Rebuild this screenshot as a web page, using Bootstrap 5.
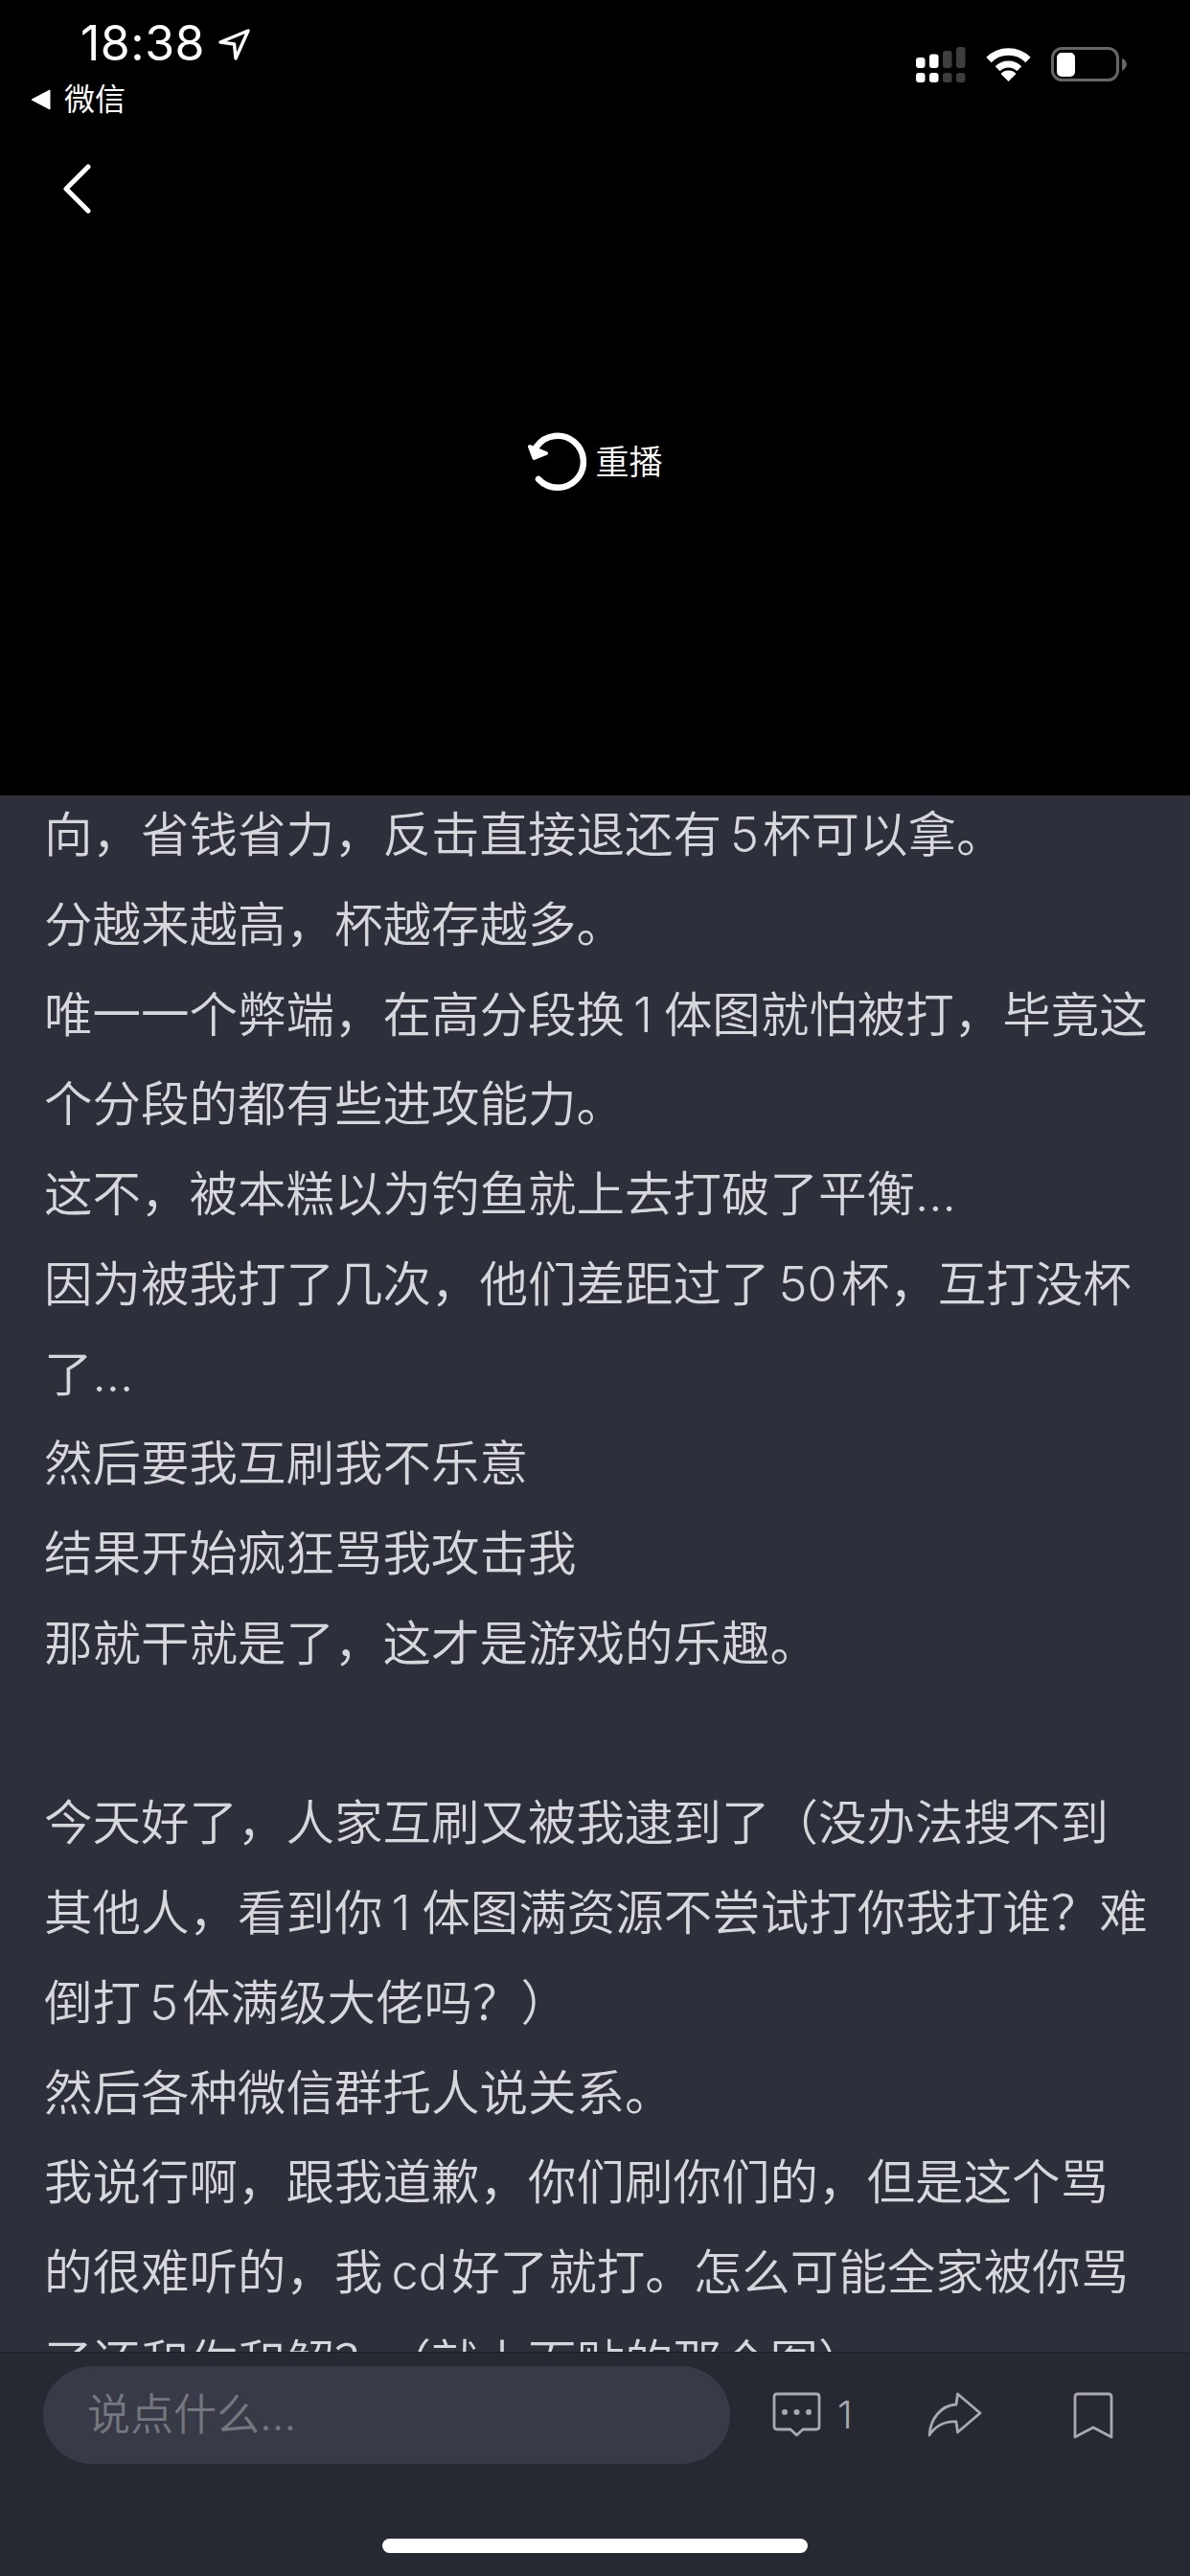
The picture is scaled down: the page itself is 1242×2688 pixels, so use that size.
<!DOCTYPE html>
<html lang="zh-CN">
<head>
<meta charset="utf-8">
<title>文章</title>
<link rel="stylesheet" href="https://cdn.jsdelivr.net/npm/bootstrap@5.3.0/dist/css/bootstrap.min.css">
<style>
html,body{margin:0;background:#000;}
.screen{width:1242px;height:2688px;font-family:Inter,"Noto Sans CJK SC",sans-serif;}
.topzone{height:830px;background:#000;color:#fff;flex:none;}
.statusrow{height:162px;padding:0 65px 0 32px;}
.timeline{padding-left:52px;height:80px;font-family:Inter,sans-serif;font-size:50px;line-height:90px;gap:14px;font-weight:400;letter-spacing:.5px;}
.locarrow{margin-top:30px;}
.backapp{height:40px;font-size:32px;line-height:40px;gap:14px;margin-top:4px;}
.sysicons{margin-top:49px;gap:21px;}
.navrow{height:70px;padding-left:64px;}
.replayrow{padding-bottom:98px;gap:9px;font-size:35px;font-weight:350;}
.articlezone{background:#2d2f3b;color:#d6d7db;font-size:50.5px;line-height:93.75px;padding:0 40px 0 46px;overflow:hidden;min-height:0;font-weight:350;}
.articletext{margin-top:-6px;}
.gapped{margin:0 4px 0 9px;font-weight:300;}
.gappedone{margin:0 12px 0 9px;font-weight:300;}
.footzone{height:234px;flex:none;background:#262832;border-top:1px solid #1f2029;padding:14px 0 0 45px;}
.saybox{width:717px;height:102px;background:#383b47;border-radius:51px;padding-left:46px;color:#75777f;font-size:45px;font-weight:350;}
.commenticon{margin-left:44px;}
.countnum{margin-left:17px;width:20px;color:#a9aab0;font-family:Inter,sans-serif;font-size:40px;font-weight:300;line-height:1;}
.shareicon{margin-left:74px;}
.markicon{margin-left:95px;}
.homebar{width:444px;height:15px;border-radius:8px;background:#fff;margin:78px 0 0 354px;}
svg{display:block;flex:none;}
</style>
</head>
<body>
<div class="screen d-flex flex-column overflow-hidden">
  <div class="topzone d-flex flex-column">
    <div class="statusrow d-flex justify-content-between align-items-start">
      <div>
        <div class="timeline d-flex align-items-start">
          <span>18:38</span>
          <svg class="locarrow" width="33" height="33" viewBox="0 0 33 33"><path d="M2 14 31 2 18 31 16.5 16Z" fill="none" stroke="#fff" stroke-width="3.4" stroke-linejoin="round"/></svg>
        </div>
        <div class="backapp d-flex align-items-center">
          <svg width="21" height="22" viewBox="0 0 21 22"><path d="M1 11 20 1V21Z" fill="#fff" stroke="#fff" stroke-width="1" stroke-linejoin="round"/></svg>
          <span>微信</span>
        </div>
      </div>
      <div class="sysicons d-flex align-items-start">
        <svg width="52" height="37" viewBox="0 0 52 37">
          <g fill="#fff"><rect x="0" y="11" width="9.5" height="11" rx="3"/><rect x="14" y="7.5" width="9.5" height="14.5" rx="3"/><rect x="0" y="27" width="9.5" height="10" rx="3"/><rect x="14" y="27" width="9.5" height="10" rx="3"/></g>
          <g fill="#3e3e3e"><rect x="28" y="4" width="9.5" height="18" rx="3"/><rect x="42" y="0" width="9.5" height="22" rx="3"/><rect x="28" y="27" width="9.5" height="10" rx="3"/><rect x="42" y="27" width="9.5" height="10" rx="3"/></g>
        </svg>
        <svg width="47" height="37" viewBox="0 0 47 37" fill="none" stroke="#fff">
          <path d="M3 13.5A29 29 0 0 1 44 13.5" stroke-width="7.5"/>
          <path d="M12.2 22.7A16 16 0 0 1 34.8 22.7" stroke-width="7"/>
          <path d="M23.5 36 15.5 28A11 11 0 0 1 31.5 28Z" fill="#fff" stroke="none"/>
        </svg>
        <svg width="80" height="37" viewBox="0 0 80 37">
          <rect x="1.5" y="1.5" width="68" height="33" rx="10" fill="none" stroke="#666" stroke-width="3"/>
          <rect x="6" y="6" width="19" height="25" rx="5" fill="#fff"/>
          <path d="M74 12C77 13 79 15.500 79 18S77 23 74 25Z" fill="#666"/>
        </svg>
      </div>
    </div>
    <div class="navrow d-flex align-items-center">
      <svg width="32" height="52" viewBox="0 0 32 52"><path d="M28 3 5 26 28 49" fill="none" stroke="#fff" stroke-width="5" stroke-linecap="round" stroke-linejoin="round"/></svg>
    </div>
    <div class="replayrow flex-grow-1 d-flex justify-content-center align-items-center">
      <svg width="62" height="62" viewBox="0 0 62 62">
        <path d="M10 15A27 27 0 1 1 12 49" fill="none" stroke="#fff" stroke-width="6.5" stroke-linecap="round"/>
        <path d="M3 15 7.500 27 20 22Z" fill="#fff" stroke="#fff" stroke-width="4" stroke-linejoin="round"/>
      </svg>
      <span>重播</span>
    </div>
  </div>
  <div class="articlezone flex-grow-1">
    <div class="articletext">
      <div>向，省钱省力，反击直接退还有<span class="gapped">5</span>杯可以拿。</div>
      <div>分越来越高，杯越存越多。</div>
      <div>唯一一个弊端，在高分段换<span class="gappedone">1</span>体图就怕被打，毕竟这个分段的都有些进攻能力。</div>
      <div>这不，被本糕以为钓鱼就上去打破了平衡...</div>
      <div>因为被我打了几次，他们差距过了<span class="gapped">50</span>杯，互打没杯了...</div>
      <div>然后要我互刷我不乐意</div>
      <div>结果开始疯狂骂我攻击我</div>
      <div>那就干就是了，这才是游戏的乐趣。</div>
      <div>&nbsp;</div>
      <div>今天好了，人家互刷又被我逮到了（没办法搜不到其他人，看到你<span class="gappedone">1</span>体图满资源不尝试打你我打谁？难倒打<span class="gapped">5</span>体满级大佬吗？）</div>
      <div>然后各种微信群托人说关系。</div>
      <div>我说行啊，跟我道歉，你们刷你们的，但是这个骂的很难听的，我<span class="gapped">cd</span>好了就打。怎么可能全家被你骂了还和你和解？（就上面贴的那个图）</div>
    </div>
  </div>
  <div class="footzone">
    <div class="d-flex align-items-center">
      <div class="saybox d-flex align-items-center">说点什么...</div>
      <svg class="commenticon" width="51" height="48" viewBox="0 0 51 48" fill="none" stroke="#a9aab0" stroke-width="2.800" stroke-linejoin="round">
        <path d="M5 2H46Q49 2 49 5V36Q49 39 46 39H32L25.500 45 19 39H5Q2 39 2 36V5Q2 2 5 2Z"/>
        <g fill="#a9aab0" stroke="none"><circle cx="13" cy="21" r="3"/><circle cx="25.500" cy="21" r="3"/><circle cx="38" cy="21" r="3"/></g>
      </svg>
      <span class="countnum">1</span>
      <svg class="shareicon" width="57" height="48" viewBox="0 0 57 48" fill="none" stroke="#a9aab0" stroke-width="2.800" stroke-linejoin="round"><path d="M31.500 2 55 22 31.500 42 30 31C18 30 8 36 2 45 3 28 14 14 30 13Z"/></svg>
      <svg class="markicon" width="42" height="49" viewBox="0 0 42 49" fill="none" stroke="#a9aab0" stroke-width="2.800" stroke-linejoin="round"><path d="M2 47 21 37 40 47V5Q40 2 37 2H5Q2 2 2 5Z"/></svg>
    </div>
    <div class="homebar"></div>
  </div>
</div>
<script src="https://cdn.jsdelivr.net/npm/bootstrap@5.3.0/dist/js/bootstrap.bundle.min.js"></script>
</body>
</html>
